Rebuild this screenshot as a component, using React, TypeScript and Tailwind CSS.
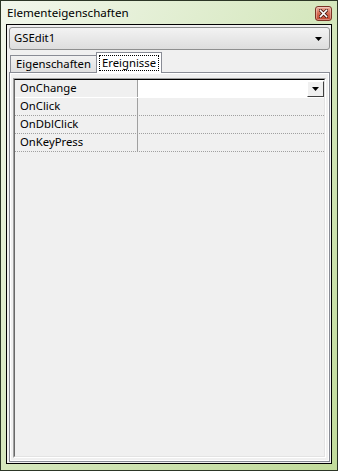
import React from "react";

// Property inspector window (Windows 7 basic theme look)
const events = ["OnChange", "OnClick", "OnDblClick", "OnKeyPress"];

function CloseButton() {
  return (
    <div className="w-[17px] h-[15px] rounded-[3px] border border-[#7a3325] bg-gradient-to-b from-[#eab0a0] via-[#d66a52] to-[#c2452e] flex items-center justify-center shadow-[inset_0_0_0_1px_rgba(255,255,255,0.35)]">
      <svg width="9" height="9" viewBox="0 0 9 9">
        <path d="M1.5 1.5 L7.5 7.5 M7.5 1.5 L1.5 7.5" stroke="#4a1a12" strokeWidth="3.2" strokeLinecap="square" />
        <path d="M1.5 1.5 L7.5 7.5 M7.5 1.5 L1.5 7.5" stroke="#ffffff" strokeWidth="1.6" strokeLinecap="square" />
      </svg>
    </div>
  );
}

function DownArrow() {
  return (
    <svg width="7" height="4" viewBox="0 0 7 4">
      <path d="M0 0 H7 L3.5 4 Z" fill="#000" />
    </svg>
  );
}

export default function App() {
  return (
    <div
      className="w-[338px] h-[471px] border border-[#2c3626] bg-gradient-to-br from-[#f2f7ec] via-[#d5e7bd] to-[#c2dc9c] flex flex-col text-[11.3px] text-black"
      style={{ fontFamily: '"Noto Sans", "DejaVu Sans", sans-serif' }}
    >
      {/* title bar */}
      <header className="h-[23px] flex items-center justify-between pl-[6px] pr-[5px] pt-[1px]">
        <span className="leading-none text-[11.6px]">Elementeigenschaften</span>
        <CloseButton />
      </header>

      {/* client area */}
      <main className="flex-1 mx-[5px] mb-[6px] border border-black bg-[#f0f0f0] flex flex-col pl-[2px] pr-[1px] pt-[2px] pb-[1px]">
        {/* object selector */}
        <div className="h-[23px] rounded-[3px] border border-[#8e8f8f] bg-gradient-to-b from-[#f3f3f3] to-[#dddddd] flex items-center justify-between pl-[4px] pr-[7px]">
          <span>GSEdit1</span>
          <DownArrow />
        </div>

        {/* tabs */}
        <div className="h-[20px] mt-[2px] flex items-end pl-[1px] relative z-10">
          <div className="h-[17px] px-[5px] border border-b-0 border-[#898c95] bg-gradient-to-b from-[#f2f2f2] to-[#e0e0e0] flex items-center">
            Eigenschaften
          </div>
          <div className="h-[21px] -ml-[1px] px-[2px] border border-b-0 border-[#898c95] bg-white flex items-center -mb-[1px] pb-[1px]">
            <span className="border border-dotted border-black px-[2px] leading-[14px]">Ereignisse</span>
          </div>
        </div>

        {/* tab page */}
        <section className="flex-1 border border-[#898c95] bg-white p-[1px]">
          <div className="h-full bg-[#f0f0f0] pt-[4px] pl-[2px] pr-[2px] pb-[2px] flex flex-col">
            <div className="flex-1 border-t border-l border-[#a0a0a0] border-r border-b border-r-white border-b-white">
              <div className="h-full border-t border-l border-t-black border-l-[#696969] border-r border-b border-r-[#e3e3e3] border-b-[#e3e3e3] bg-[#f0f0f0]">
                {events.map((name, i) => (
                  <div
                    key={name}
                    className={`h-[18px] flex ${
                      i === 0 ? "border-b border-white" : "border-b border-dotted border-[#a0a0a0]"
                    }`}
                  >
                    <div className="w-[123px] flex items-center pl-[5px] border-r border-[#a0a0a0]">
                      {name}
                    </div>
                    {i === 0 ? (
                      <div className="flex-1 bg-white flex justify-end items-start">
                        <div className="w-[17px] h-[16px] mt-[1px] bg-[#f0f0f0] border-t border-l border-white border-r border-b border-r-[#404040] border-b-[#404040] flex items-center justify-center">
                          <DownArrow />
                        </div>
                      </div>
                    ) : (
                      <div className="flex-1" />
                    )}
                  </div>
                ))}
              </div>
            </div>
          </div>
        </section>
      </main>
    </div>
  );
}
